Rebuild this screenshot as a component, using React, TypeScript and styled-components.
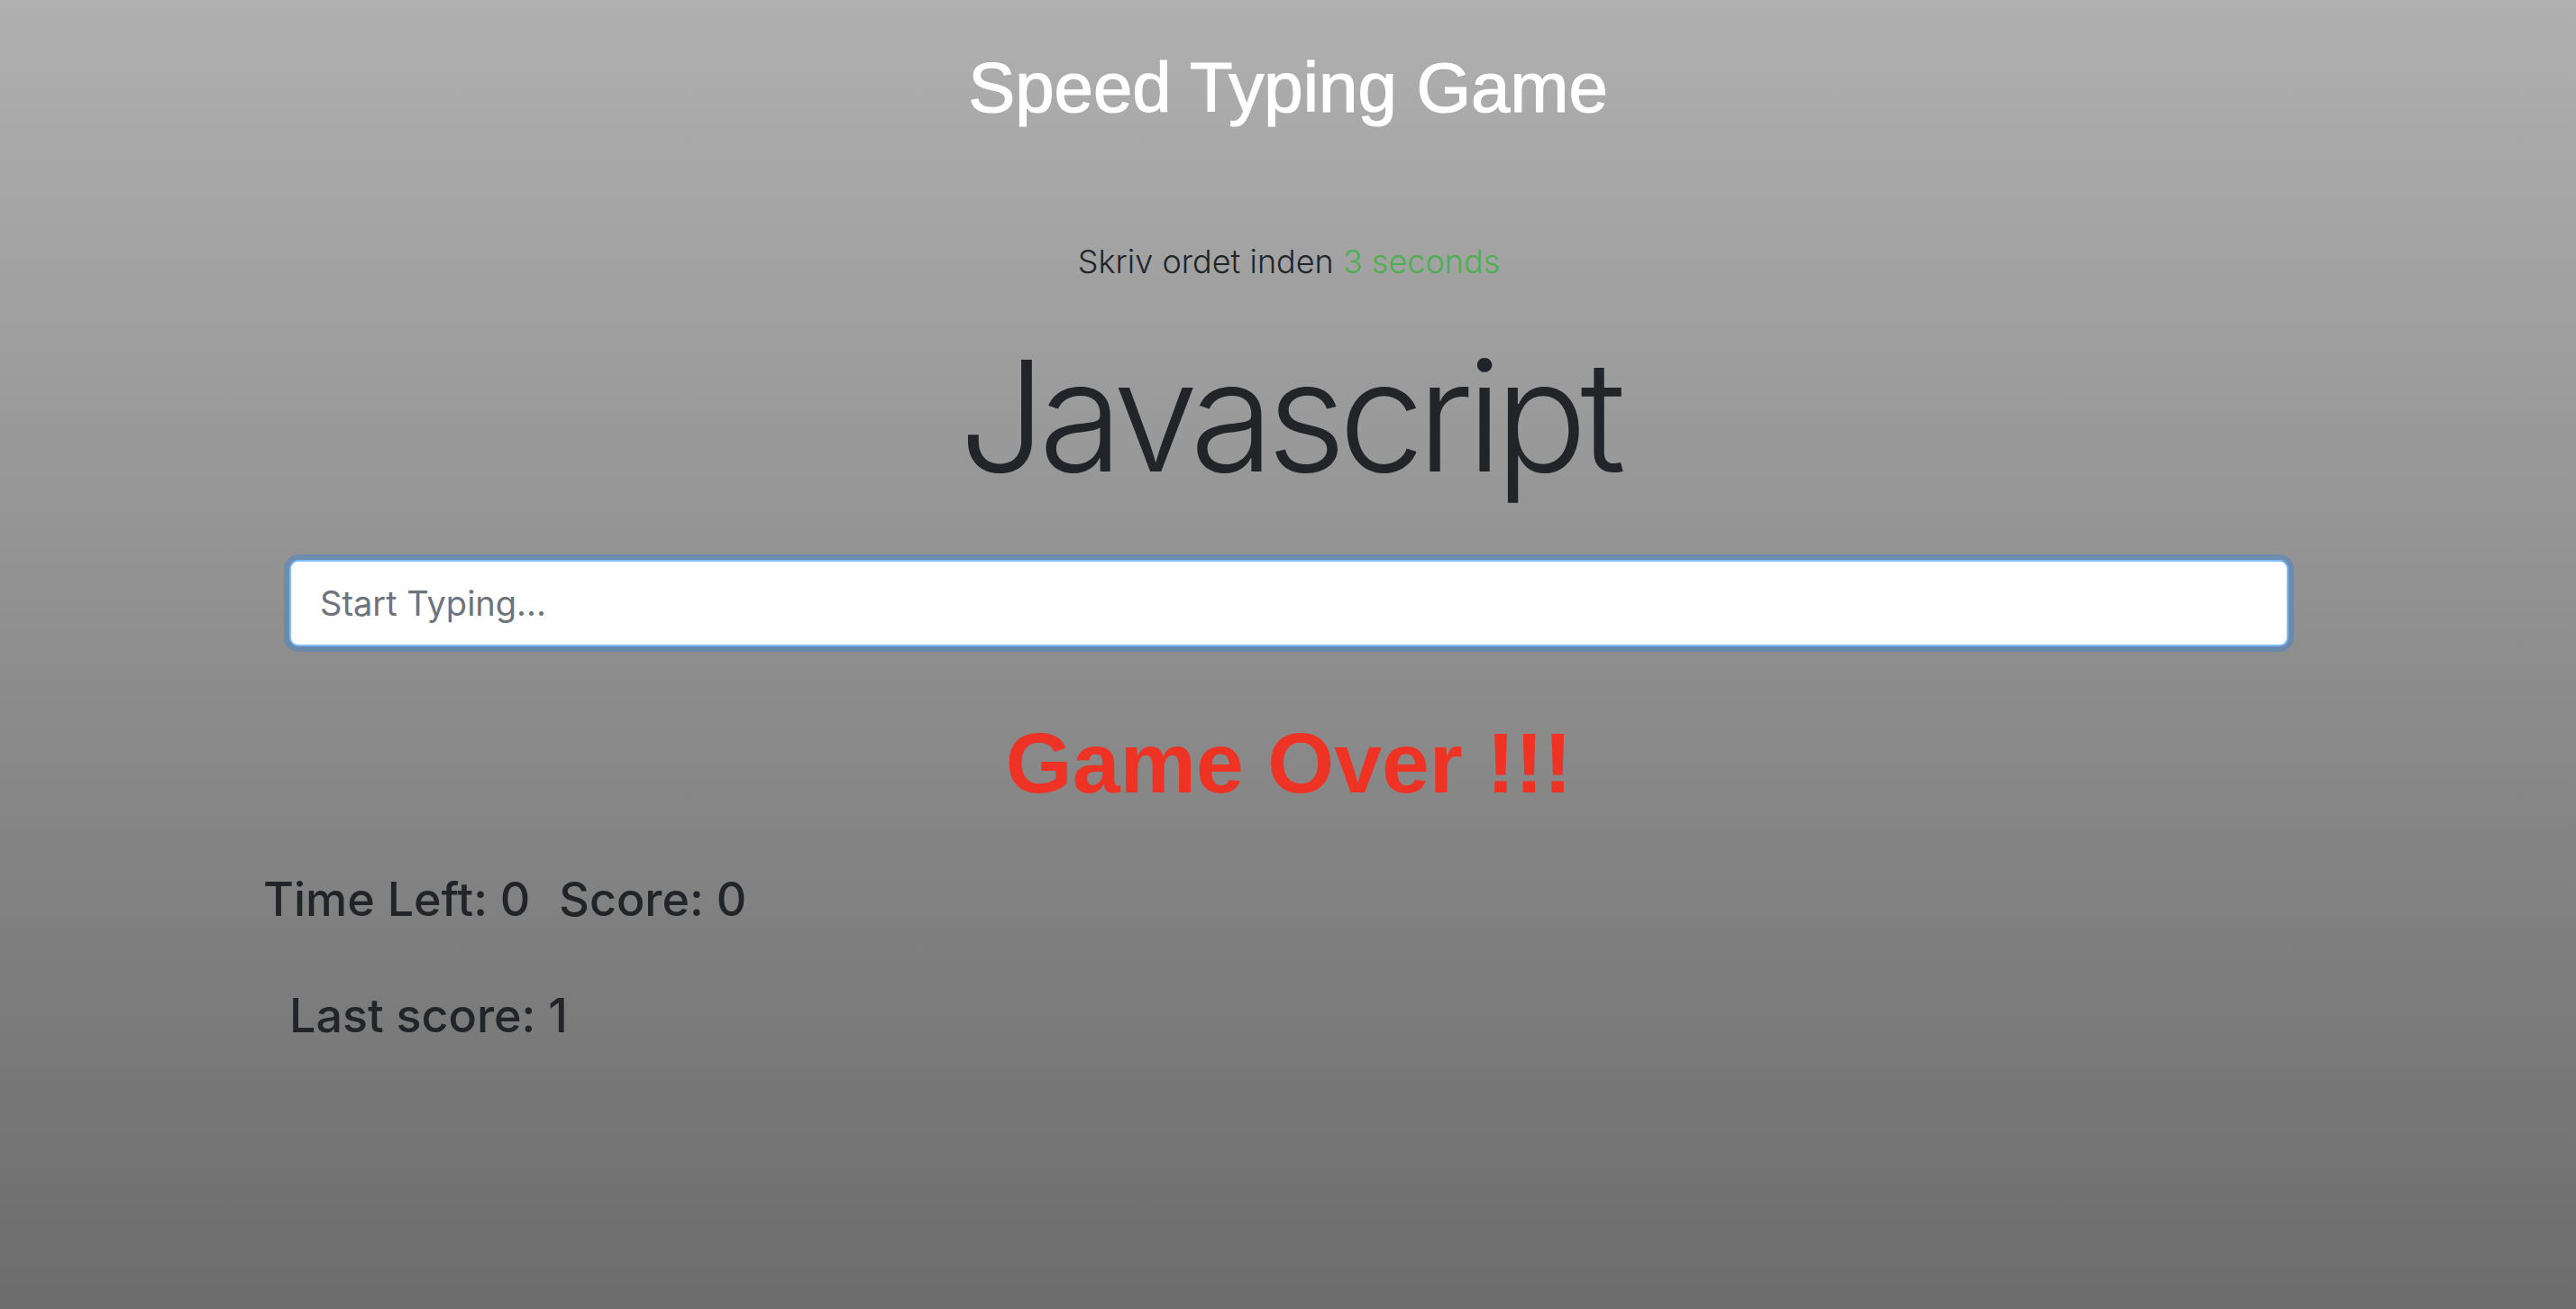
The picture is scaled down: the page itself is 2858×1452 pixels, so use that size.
import React from "react";
import styled, { createGlobalStyle } from "styled-components";

const GlobalStyle = createGlobalStyle`
  html, body { margin: 0; padding: 0; }
  body {
    font-family: Inter, "Noto Sans", sans-serif;
    color: #212529;
  }
`;

const Page = styled.div`
  min-height: 100vh;
  background: linear-gradient(to bottom, #b0b0b0 0%, #6c6c6c 100%);
  display: flex;
  flex-direction: column;
  align-items: center;
`;

const Title = styled.h1`
  margin: 51px 0 0;
  font-family: "Liberation Sans", Arial, sans-serif;
  font-weight: 500;
  font-size: 78px;
  line-height: 1.2;
  color: #ffffff;
  -webkit-text-stroke: 1.2px #ffffff;
  text-align: center;
`;

const Container = styled.main`
  box-sizing: border-box;
  width: 2280px;
  padding: 0 30px 0 32px;
  display: flex;
  flex-direction: column;
`;

const Lead = styled.p`
  margin: 118px 0 0;
  font-family: Inter, sans-serif;
  font-weight: 300;
  font-size: 36px;
  line-height: 1.5;
  text-align: center;
  color: #212529;
`;

const Seconds = styled.span`
  color: #4caf50;
`;

const Word = styled.h2`
  margin: 42px 0 0;
  font-family: Inter, sans-serif;
  font-weight: 300;
  font-size: 170px;
  line-height: 1.2;
  letter-spacing: -8px;
  text-align: center;
  color: #212529;
`;

const TypeInput = styled.input`
  box-sizing: border-box;
  margin-top: 58px;
  width: 100%;
  height: 96px;
  padding: 16px 32px;
  font-family: Inter, sans-serif;
  font-size: 38px;
  color: #495057;
  background: #ffffff;
  border: 2px solid #80bdff;
  border-radius: 10px;
  box-shadow: 0 0 0 6px rgba(0, 123, 255, 0.25);
  outline: none;
  &::placeholder {
    color: #6c757d;
  }
`;

const GameOver = styled.h2`
  margin: 72px 0 0;
  font-family: "Liberation Sans", Arial, sans-serif;
  font-weight: 700;
  font-size: 95px;
  line-height: 1.2;
  text-align: center;
  color: #ee3224;
`;

const StatsRow = styled.div`
  margin: 64px -30px 0 -29px;
  display: flex;
  gap: 32px;
`;

const Stat = styled.h3`
  margin: 0;
  font-family: Inter, sans-serif;
  font-weight: 500;
  font-size: 52px;
  line-height: 1.2;
  color: #212529;
`;

const LastScore = styled(Stat)`
  margin-top: 67px;
`;

export default function App() {
  return (
    <>
      <GlobalStyle />
      <Page>
        <Title>Speed Typing Game</Title>
        <Container>
          <Lead>
            Skriv ordet inden <Seconds>3 seconds</Seconds>
          </Lead>
          <Word>Javascript</Word>
          <TypeInput placeholder="Start Typing..." />
          <GameOver>Game Over !!!</GameOver>
          <StatsRow>
            <Stat>Time Left: 0</Stat>
            <Stat>Score: 0</Stat>
          </StatsRow>
          <LastScore>Last score: 1</LastScore>
        </Container>
      </Page>
    </>
  );
}
